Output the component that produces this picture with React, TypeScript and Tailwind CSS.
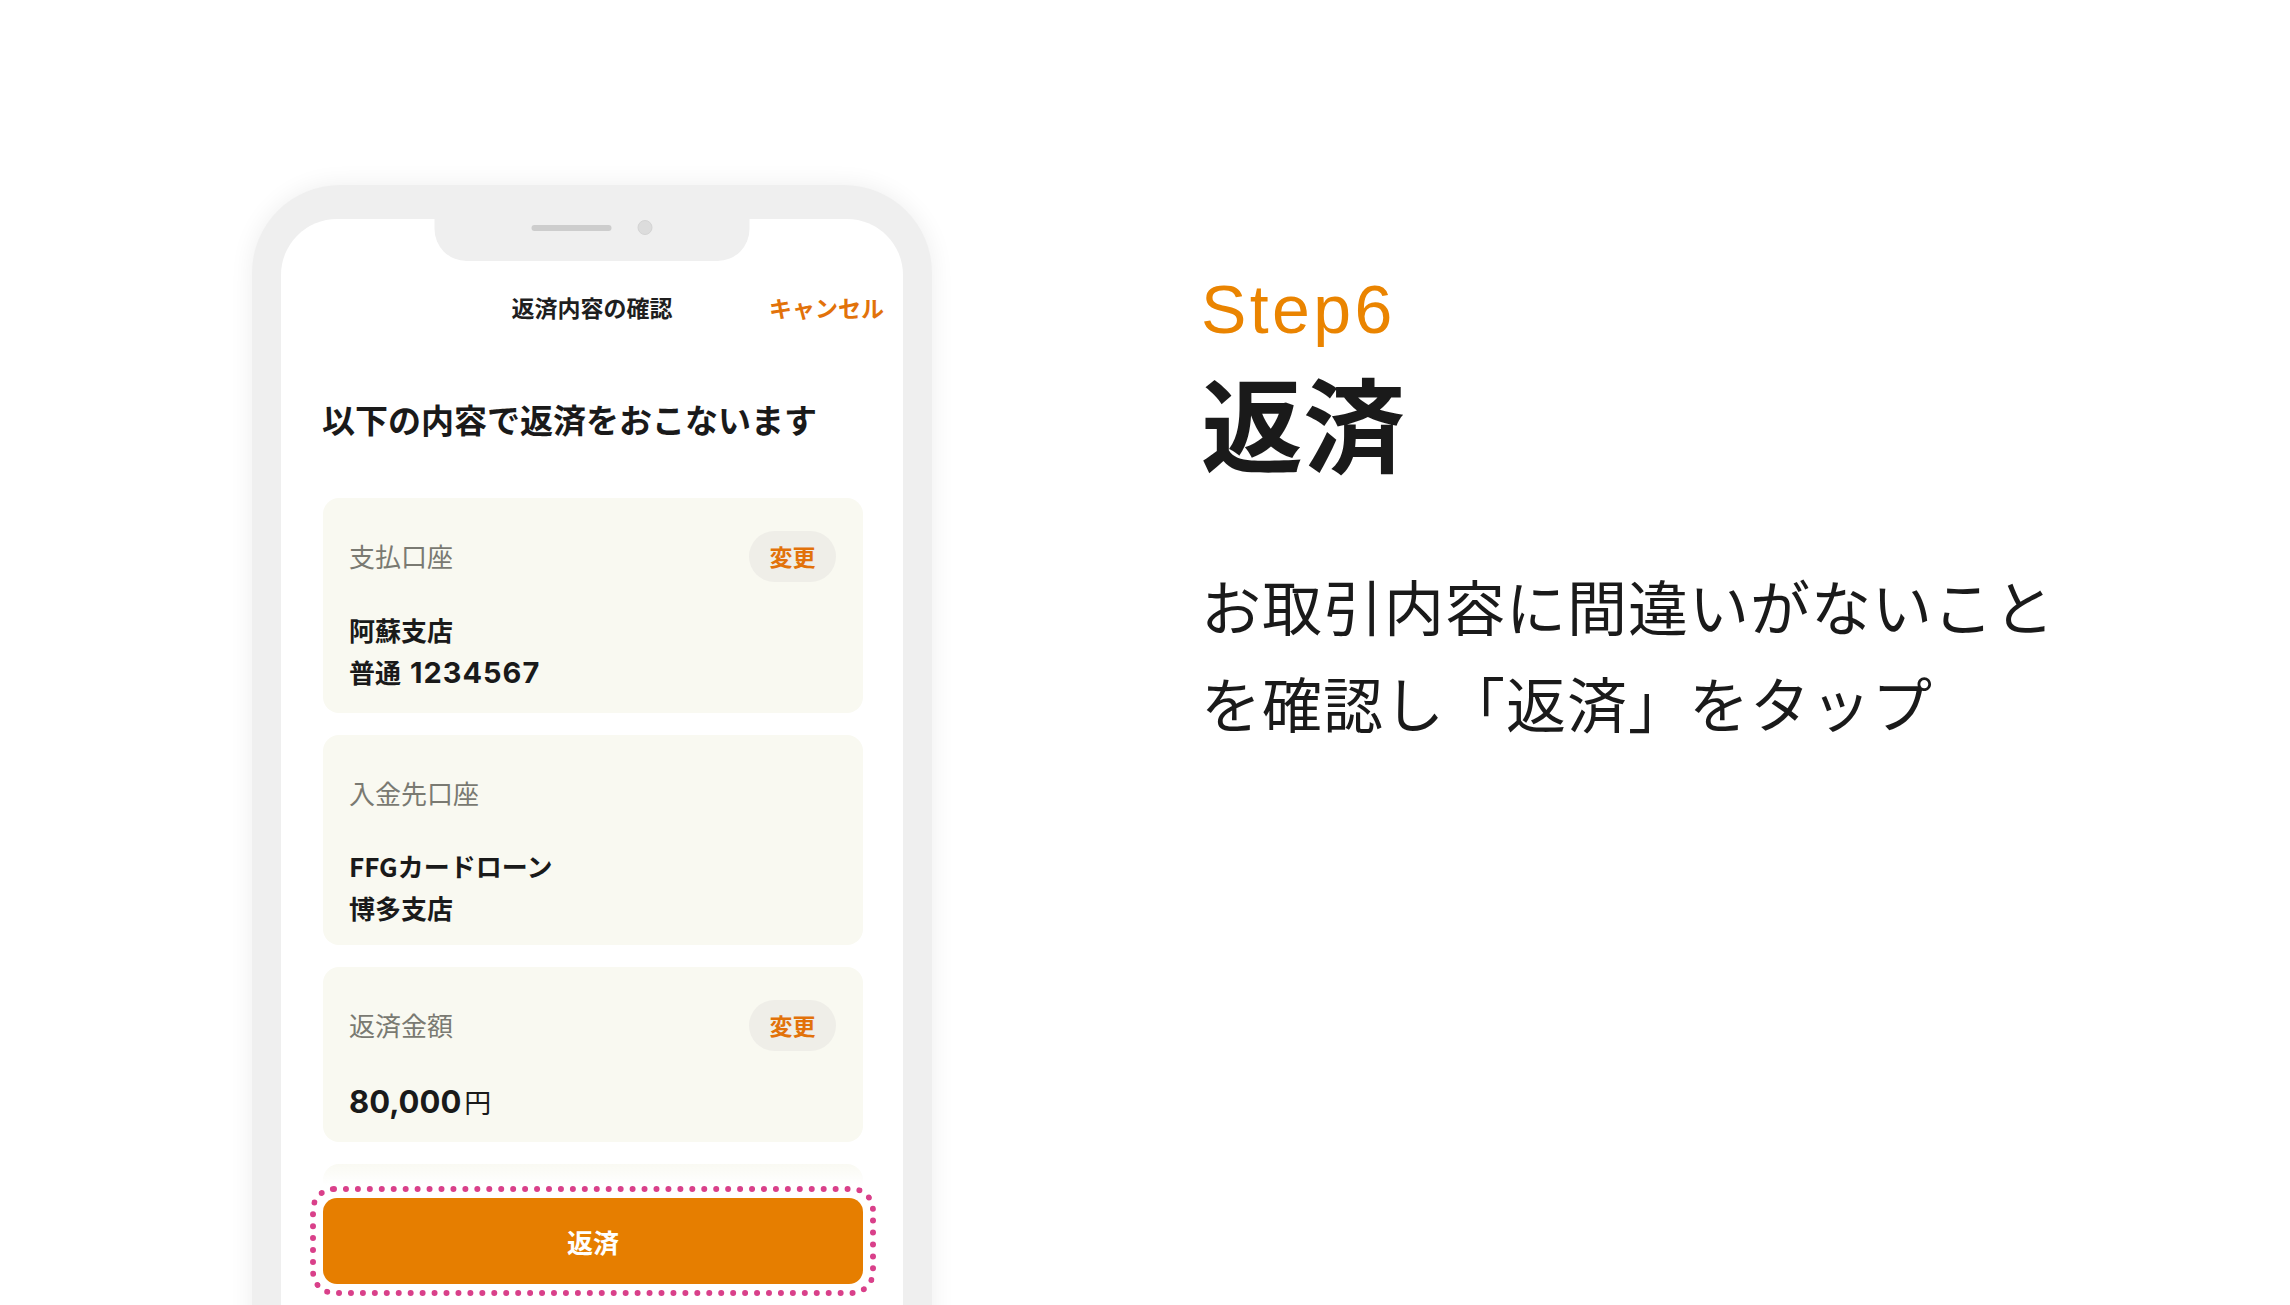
type Card = {
  label: string;
  lines: string[];
  editable?: boolean;
  amount?: boolean;
  body: string; // spacing above the value lines
  bottom: string; // padding below them
};

const cards: Card[] = [
  { label: '支払口座', lines: ['阿蘇支店', '普通 1234567'], editable: true, body: 'mt-[28px]', bottom: 'pb-[20px]' },
  { label: '入金先口座', lines: ['FFGカードローン', '博多支店'], body: 'mt-[27px]', bottom: 'pb-[16px]' },
  { label: '返済金額', lines: ['80,000'], editable: true, amount: true, body: 'mt-[30px]', bottom: 'pb-[20px]' },
];

// digits in the reference are set larger than the kana around them
function Line({ text }: { text: string }) {
  const m = text.match(/^(.*?)(\d+)$/);
  if (!m) return <>{text}</>;
  return (
    <>
      {m[1]}
      <span className="ml-[3px] font-['Inter',sans-serif] text-[29px] tracking-[0.035em]">{m[2]}</span>
    </>
  );
}

function InfoCard({ card }: { card: Card }) {
  return (
    <div className={`rounded-[16px] bg-[#f9f9f1] pl-[26px] pr-[27px] pt-[33px] ${card.bottom}`}>
      <div className="flex h-[50px] items-center justify-between">
        <span className="text-[26px] leading-none text-[#7a7a72]">{card.label}</span>
        {card.editable && (
          <span className="flex h-[51px] w-[87px] items-center justify-center rounded-full bg-[#efeee8] text-[23px] font-bold text-[#e2720a]">
            変更
          </span>
        )}
      </div>
      <div className={card.body}>
        {card.amount ? (
          <div className="flex h-[42px] items-center text-[#1a1a1a]">
            <span className="font-['Inter',sans-serif] text-[31px] font-bold leading-none">{card.lines[0]}</span>
            <span className="ml-[3px] text-[27px] leading-none">円</span>
          </div>
        ) : (
          card.lines.map((line) => (
            <div key={line} className="h-[42px] text-[26px] font-bold leading-[42px] text-[#1a1a1a]">
              <Line text={line} />
            </div>
          ))
        )}
      </div>
    </div>
  );
}

function Phone() {
  return (
    <div className="h-[1200px] w-[680px] rounded-t-[88px] bg-[#efefef] px-[29px] pt-[34px] shadow-[0_0_24px_rgba(0,0,0,0.07)]">
      <div className="relative flex h-full flex-col overflow-hidden rounded-t-[56px] bg-white">
        {/* notch */}
        <div className="absolute left-1/2 top-0 flex h-[42px] w-[315px] -translate-x-1/2 items-start justify-center gap-[26px] rounded-b-[32px] bg-[#efefef] pt-[1px]">
          <div className="mt-[5px] h-[6px] w-[80px] rounded-full bg-[#cdcdcd]" />
          <div className="h-[15px] w-[15px] rounded-full border border-[#d4d4d4] bg-[#dcdcdc]" />
        </div>

        <div className="mt-[68px] grid h-[40px] grid-cols-[1fr_auto_1fr] items-center">
          <div />
          <span className="text-[23px] font-bold text-[#1f1f1f]">返済内容の確認</span>
          <span className="justify-self-end pr-[19px] text-[23px] font-bold text-[#e2720a]">キャンセル</span>
        </div>

        <h2 className="mt-[68px] px-[41px] text-[33px] font-bold leading-[48px] text-[#1a1a1a]">
          以下の内容で返済をおこないます
        </h2>

        <div className="mt-[55px] flex flex-col gap-[22px] pl-[42px] pr-[40px]">
          {cards.map((c) => (
            <InfoCard key={c.label} card={c} />
          ))}
          <div className="h-[150px] rounded-[16px] bg-[#f9f9f1]" />
        </div>

        {/* fixed footer over the list */}
        <div className="absolute left-0 right-0 top-[942px]">
          <div className="h-[24px] bg-gradient-to-b from-white/0 to-white" />
          <div className="bg-white pt-[1px] pb-[40px]">
            <div className="ml-[29px] mr-[27px] rounded-[24px] border-[6px] border-dotted border-[#d9408a] px-[7px] py-[6px]">
              <div className="flex h-[86px] items-center justify-center rounded-[14px] bg-[#e67e00] text-[26px] font-bold text-white">
                返済
              </div>
            </div>
          </div>
        </div>
      </div>
    </div>
  );
}

export default function App() {
  return (
    <div className="flex h-[1305px] w-[2290px] overflow-hidden bg-white font-['Noto_Sans_CJK_JP','Noto_Sans',sans-serif]">
      <div className="pl-[252px] pt-[185px]">
        <Phone />
      </div>
      <div className="pl-[269px] pt-[275px]">
        <div className="font-['Liberation_Sans',Arial,sans-serif] text-[68px] leading-[68px] tracking-[0.05em] text-[#ea8400]">
          Step6
        </div>
        <div className="mt-[27px] text-[102px] font-bold leading-[102px] text-[#1a1a1a]">返済</div>
        <p className="mt-[84px] text-[60px] leading-[97px] tracking-[1px] text-[#1a1a1a]">
          お取引内容に間違いがないこと
          <br />
          を確認し「返済」をタップ
        </p>
      </div>
    </div>
  );
}
